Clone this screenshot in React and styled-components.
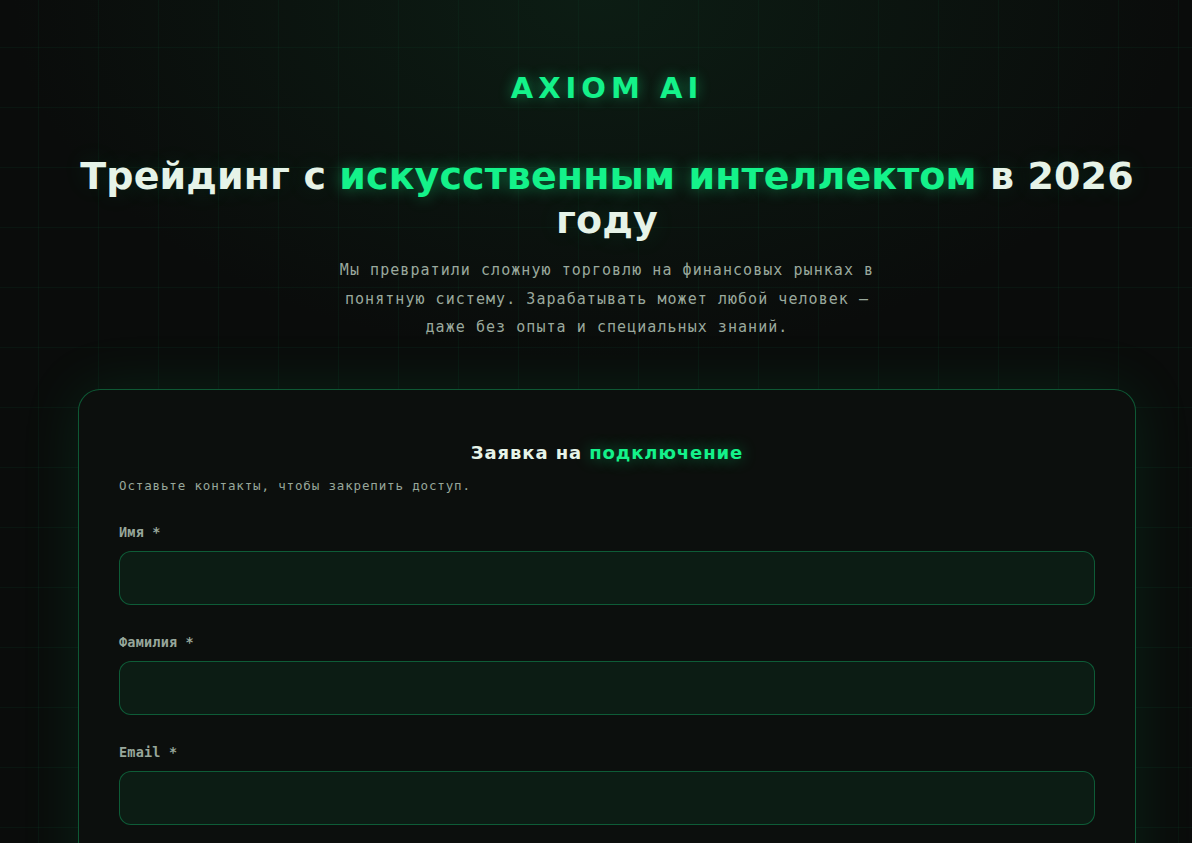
import React from 'react';
import styled, { createGlobalStyle } from 'styled-components';

const GlobalStyle = createGlobalStyle`
  * { box-sizing: border-box; }
  html, body {
    margin: 0;
    padding: 0;
    background: #0a0c0b;
  }
`;

const Page = styled.div`
  min-height: 100vh;
  background-color: #0a0c0b;
  background-image:
    radial-gradient(ellipse 70% 45% at 50% 0%, rgba(16, 60, 36, 0.35), transparent 70%),
    linear-gradient(rgba(0, 255, 136, 0.045) 1px, transparent 1px),
    linear-gradient(90deg, rgba(0, 255, 136, 0.045) 1px, transparent 1px);
  background-size: 100% 100%, 60px 60px, 60px 60px;
  background-position: 0 0, 38px 47px, 38px 47px;
  padding: 70px 56px 80px 78px;
  display: flex;
  flex-direction: column;
  align-items: center;
`;

const Logo = styled.div`
  font-family: "DejaVu Sans", sans-serif;
  font-weight: 700;
  font-size: 29px;
  letter-spacing: 5px;
  color: #14f28a;
  text-shadow: 0 0 14px rgba(20, 242, 138, 0.45);
  line-height: 36px;
`;

const Headline = styled.h1`
  margin: 48px 0 0;
  max-width: 1080px;
  text-align: center;
  font-family: "DejaVu Sans", sans-serif;
  font-weight: 700;
  font-size: 38px;
  line-height: 44px;
  letter-spacing: 0.1px;
  color: #e6f3e8;
  text-shadow: 0 0 24px rgba(20, 242, 138, 0.12);
`;

const Accent = styled.span`
  color: #14f28a;
  text-shadow: 0 0 16px rgba(20, 242, 138, 0.45);
`;

const Lead = styled.p`
  margin: 14px 0 0;
  max-width: 560px;
  text-align: center;
  font-family: "DejaVu Sans Mono", monospace;
  font-size: 15px;
  line-height: 28.5px;
  letter-spacing: 1.05px;
  color: #9aa99d;
`;

const Card = styled.section`
  margin-top: 47px;
  width: 100%;
  max-width: 1058px;
  background: #0c0f0d;
  border: 1px solid rgba(20, 242, 138, 0.32);
  border-radius: 22px;
  box-shadow: 0 0 60px rgba(20, 200, 110, 0.12);
  padding: 50px 40px 40px;
`;

const CardTitle = styled.h2`
  margin: 0;
  text-align: center;
  font-family: "DejaVu Sans", sans-serif;
  font-weight: 700;
  font-size: 18px;
  line-height: 26px;
  letter-spacing: 0.9px;
  color: #e6f3e8;
`;

const CardNote = styled.p`
  margin: 11px 0 0;
  font-family: "DejaVu Sans Mono", monospace;
  font-size: 12.5px;
  letter-spacing: 0.85px;
  line-height: 18px;
  color: #98a79b;
`;

const Form = styled.form`
  margin-top: 28px;
  display: flex;
  flex-direction: column;
  gap: 28px;
`;

const Field = styled.label`
  display: flex;
  flex-direction: column;
  gap: 10px;
`;

const LabelText = styled.span`
  font-family: "DejaVu Sans Mono", monospace;
  font-weight: 700;
  font-size: 13.5px;
  letter-spacing: 0.2px;
  line-height: 18px;
  color: #98a79b;
`;

const Input = styled.input`
  height: 54px;
  width: 100%;
  padding: 0 18px;
  background: #0c1c14;
  border: 1px solid rgba(20, 242, 138, 0.3);
  border-radius: 12px;
  color: #e6f3e8;
  font-family: "DejaVu Sans Mono", monospace;
  font-size: 15px;
  outline: none;
`;

const Submit = styled.button`
  height: 56px;
  border: none;
  border-radius: 12px;
  background: #14f28a;
  color: #04140b;
  font-family: "DejaVu Sans", sans-serif;
  font-weight: 700;
  font-size: 16px;
  cursor: pointer;
`;

const fields = [
  { id: 'firstName', label: 'Имя *', type: 'text' },
  { id: 'lastName', label: 'Фамилия *', type: 'text' },
  { id: 'email', label: 'Email *', type: 'email' },
  { id: 'phone', label: 'Телефон *', type: 'tel' },
];

const App = () => {
  return (
    <>
      <GlobalStyle />
      <Page>
        <Logo>AXIOM AI</Logo>
        <Headline>
          Трейдинг с <Accent>искусственным интеллектом</Accent> в 2026 году
        </Headline>
        <Lead>
          Мы превратили сложную торговлю на финансовых рынках в понятную систему. Зарабатывать может любой человек — даже без опыта и специальных знаний.
        </Lead>
        <Card>
          <CardTitle>
            Заявка на <Accent>подключение</Accent>
          </CardTitle>
          <CardNote>Оставьте контакты, чтобы закрепить доступ.</CardNote>
          <Form onSubmit={(e) => e.preventDefault()}>
            {fields.map((f) => (
              <Field key={f.id} htmlFor={f.id}>
                <LabelText>{f.label}</LabelText>
                <Input id={f.id} name={f.id} type={f.type} />
              </Field>
            ))}
            <Submit type="submit">Получить доступ</Submit>
          </Form>
        </Card>
      </Page>
    </>
  );
};

export default App;
